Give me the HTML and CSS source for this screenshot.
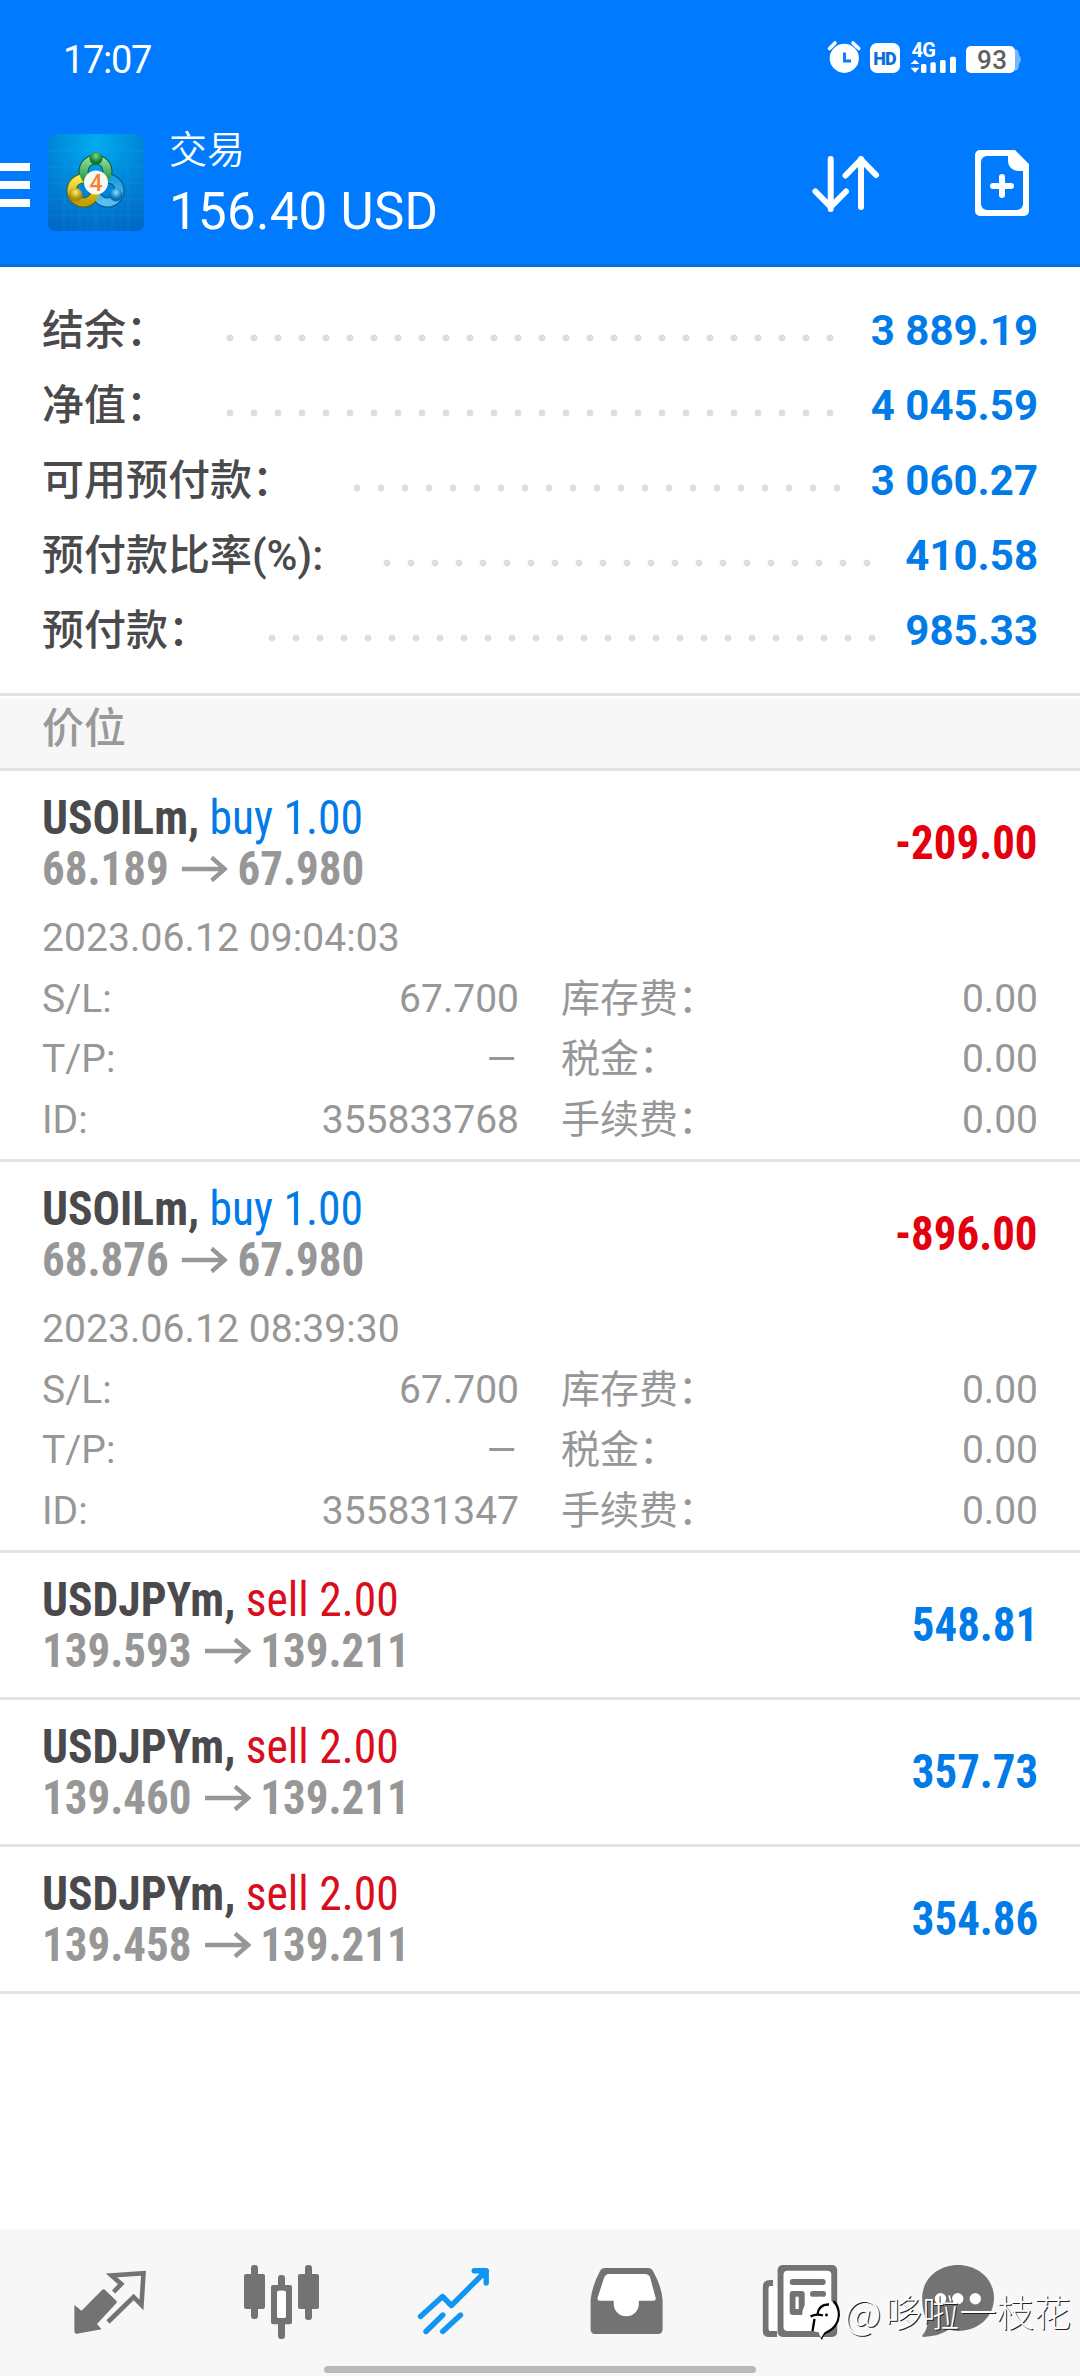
FILE: index.html
```html
<!DOCTYPE html>
<html lang="zh-CN">
<head>
<meta charset="utf-8">
<meta name="viewport" content="width=1080">
<title>交易</title>
<link rel="stylesheet" href="styles.css">
</head>
<body>
<div class="app">
  <header class="top">
    <div class="status">
      <span class="clock">17:07</span>
      <svg class="status-icons" width="200" height="40" viewBox="0 0 200 40">
        <g fill="#fff">
          <circle cx="19.3" cy="20.3" r="14.6"/>
          <path d="M4.500 10.500L10 5M28 5l5.800 5.500" stroke="#fff" stroke-width="3.600" stroke-linecap="round"/>
          <rect x="45" y="5" width="30" height="30" rx="7"/>
          <path d="M90 21.700l4.500 4.300h-9zM90 34.800l-4.500-5.100h9z"/>
          <rect x="96" y="26" width="5.400" height="9" rx="1.500"/>
          <rect x="105.400" y="24.300" width="5.400" height="10.700" rx="1.500"/>
          <rect x="115" y="22" width="5.600" height="13" rx="1.500"/>
          <rect x="125" y="18.700" width="6" height="16.300" rx="1.500"/>
        </g>
        <path d="M190 11q4 1 4 6q4 4 0 9q0 6-4 7z" fill="#73b9ff"/>
        <rect x="141" y="8" width="49" height="27" rx="5" fill="#fff"/>
        <path d="M19.500 14.500v8.500h6.500" fill="none" stroke="#0b7cf4" stroke-width="3"/>
        <text class="hd" x="48.300" y="26.600" textLength="23.400">HD</text>
        <text class="net" x="86.500" y="19.300" textLength="24.500">4G</text>
        <text class="battery" x="152" y="31" textLength="30">93</text>
      </svg>
    </div>
    <div class="bar">
      <div class="menu"><i></i><i></i><i></i></div>
      <svg class="logo" width="96" height="97" viewBox="0 0 96 97">
        <defs>
          <radialGradient id="sky" cx=".5" cy=".1" r=".95"><stop offset="0" stop-color="#00acf0"/><stop offset=".5" stop-color="#0086da"/><stop offset="1" stop-color="#0069c8"/></radialGradient>
          <linearGradient id="green" x2="0" y2="1"><stop offset="0" stop-color="#8ed79a"/><stop offset="1" stop-color="#158c32"/></linearGradient>
          <linearGradient id="gold" x2="0" y2="1"><stop offset="0" stop-color="#ffe64a"/><stop offset="1" stop-color="#c0a000"/></linearGradient>
          <linearGradient id="azure" x2="0" y2="1"><stop offset="0" stop-color="#1c9ce0"/><stop offset="1" stop-color="#58c0ee"/></linearGradient>
          <radialGradient id="gball" cy=".3"><stop offset="0" stop-color="#7fd68f"/><stop offset="1" stop-color="#0c7a2c"/></radialGradient>
          <radialGradient id="yball" cy=".3"><stop offset="0" stop-color="#ffec6a"/><stop offset="1" stop-color="#a68a00"/></radialGradient>
          <radialGradient id="bball" cy=".3"><stop offset="0" stop-color="#8cdcff"/><stop offset="1" stop-color="#0670b4"/></radialGradient>
        </defs>
        <rect width="96" height="97" rx="7" fill="url(#sky)"/>
        <path d="M16 0v97M32 0v97M48 0v97M64 0v97M80 0v97M0 17h96M0 33h96M0 49h96M0 65h96M0 81h96" stroke="#4cc4ff" stroke-opacity=".12"/>
        <g fill="none" stroke-width="8">
          <circle cx="47.500" cy="37.500" r="12" stroke="#0b5b33" stroke-width="10"/>
          <circle cx="35.500" cy="56.500" r="12" stroke="#59650c" stroke-width="10"/>
          <circle cx="59.500" cy="56.500" r="12" stroke="#04538c" stroke-width="10"/>
          <circle cx="59.500" cy="56.500" r="12" stroke="url(#azure)"/>
          <circle cx="35.500" cy="56.500" r="12" stroke="url(#gold)"/>
          <circle cx="47.500" cy="37.500" r="12" stroke="url(#green)"/>
        </g>
        <circle cx="48" cy="24.500" r="6.500" fill="url(#gball)"/>
        <circle cx="27.500" cy="61" r="7" fill="url(#yball)"/>
        <circle cx="68" cy="61" r="6.500" fill="url(#bball)"/>
        <circle cx="48" cy="48.500" r="12" fill="#f8f8f4"/>
        <text class="logo-digit" x="48" y="56.500">4</text>
      </svg>
      <div class="account">
        <div class="screen-name">交易</div>
        <div class="profit-total">156.40 USD</div>
      </div>
      <svg class="sort" width="70" height="66" viewBox="0 0 70 66" fill="none" stroke="#fff" stroke-width="6" stroke-linecap="round" stroke-linejoin="round">
        <path d="M20.700 9v50M5.500 41.500L20.700 57 36 41.500M51 57V9M35.500 25.500L51 9.500l15 15.500"/>
      </svg>
      <svg class="new-order" width="54" height="66" viewBox="0 0 54 66">
        <path fill="#fff" fill-rule="evenodd" d="M5 0H40L54 14V61a5 5 0 0 1-5 5H5a5 5 0 0 1-5-5V5a5 5 0 0 1 5-5zM12 6a6 6 0 0 0-6 6v42a6 6 0 0 0 6 6h30a6 6 0 0 0 6-6V21h-5a10 10 0 0 1-10-10V6z"/>
        <path d="M27 27v18M18 36h18" stroke="#fff" stroke-width="6" stroke-linecap="round"/>
      </svg>
    </div>
  </header>

  <section class="summary">
    <div class="sum-row"><span>结余：</span><i class="dots long gap-a"></i><b>3 889.19</b></div>
    <div class="sum-row"><span>净值：</span><i class="dots long gap-a"></i><b>4 045.59</b></div>
    <div class="sum-row"><span>可用预付款：</span><i class="dots short gap-b"></i><b>3 060.27</b></div>
    <div class="sum-row"><span>预付款比率(%):</span><i class="dots short gap-c"></i><b>410.58</b></div>
    <div class="sum-row"><span>预付款：</span><i class="dots long gap-d"></i><b>985.33</b></div>
  </section>

  <h2 class="section-title">价位</h2>

  <main class="positions">
    <article class="position open">
      <div class="head">
        <div>
          <div class="line cond"><b>USOILm,</b> <span class="buy">buy 1.00</span></div>
          <div class="line cond prices"><b>68.189</b><svg class="arrow" width="49" height="26" viewBox="0 0 49 26"><path d="M0 13H46M32 1.500L46 13 32 24.500" fill="none" stroke="#979797" stroke-width="4.500"/></svg><b>67.980</b></div>
        </div>
        <b class="result cond loss">-209.00</b>
      </div>
      <div class="date">2023.06.12 09:04:03</div>
      <div class="details">
        <div><span>S/L:</span><span>67.700</span></div><div><span>库存费：</span><span>0.00</span></div>
        <div><span>T/P:</span><span class="none">–</span></div><div><span>税金：</span><span>0.00</span></div>
        <div><span>ID:</span><span>355833768</span></div><div><span>手续费：</span><span>0.00</span></div>
      </div>
    </article>
    <article class="position open">
      <div class="head">
        <div>
          <div class="line cond"><b>USOILm,</b> <span class="buy">buy 1.00</span></div>
          <div class="line cond prices"><b>68.876</b><svg class="arrow" width="49" height="26" viewBox="0 0 49 26"><path d="M0 13H46M32 1.500L46 13 32 24.500" fill="none" stroke="#979797" stroke-width="4.500"/></svg><b>67.980</b></div>
        </div>
        <b class="result cond loss">-896.00</b>
      </div>
      <div class="date">2023.06.12 08:39:30</div>
      <div class="details">
        <div><span>S/L:</span><span>67.700</span></div><div><span>库存费：</span><span>0.00</span></div>
        <div><span>T/P:</span><span class="none">–</span></div><div><span>税金：</span><span>0.00</span></div>
        <div><span>ID:</span><span>355831347</span></div><div><span>手续费：</span><span>0.00</span></div>
      </div>
    </article>
    <article class="position">
      <div class="head">
        <div>
          <div class="line cond"><b>USDJPYm,</b> <span class="sell">sell 2.00</span></div>
          <div class="line cond prices"><b>139.593</b><svg class="arrow" width="49" height="26" viewBox="0 0 49 26"><path d="M0 13H46M32 1.500L46 13 32 24.500" fill="none" stroke="#979797" stroke-width="4.500"/></svg><b>139.211</b></div>
        </div>
        <b class="result cond gain">548.81</b>
      </div>
    </article>
    <article class="position">
      <div class="head">
        <div>
          <div class="line cond"><b>USDJPYm,</b> <span class="sell">sell 2.00</span></div>
          <div class="line cond prices"><b>139.460</b><svg class="arrow" width="49" height="26" viewBox="0 0 49 26"><path d="M0 13H46M32 1.500L46 13 32 24.500" fill="none" stroke="#979797" stroke-width="4.500"/></svg><b>139.211</b></div>
        </div>
        <b class="result cond gain">357.73</b>
      </div>
    </article>
    <article class="position">
      <div class="head">
        <div>
          <div class="line cond"><b>USDJPYm,</b> <span class="sell">sell 2.00</span></div>
          <div class="line cond prices"><b>139.458</b><svg class="arrow" width="49" height="26" viewBox="0 0 49 26"><path d="M0 13H46M32 1.500L46 13 32 24.500" fill="none" stroke="#979797" stroke-width="4.500"/></svg><b>139.211</b></div>
        </div>
        <b class="result cond gain">354.86</b>
      </div>
    </article>
  </main>

  <nav class="tabs">
    <svg viewBox="0 0 100 100">
      <path d="M14.400 55L21.500 60.700 42 40Q43.300 38.500 44.600 39.600L56.500 51Q57.300 52 56.500 53L37 74 41.500 79.300 17 83.800Q14.400 84 14.400 81.500z" fill="#737373"/>
      <path d="M53.600 42L61.200 34 51.500 25.500 83.500 23.300 81.500 55 73.600 47 48 72" fill="none" stroke="#737373" stroke-width="4.600"/>
    </svg>
    <svg viewBox="0 0 100 100" fill="#737373">
      <rect x="12" y="24" width="21" height="35" rx="2"/><rect x="19" y="15" width="7" height="54" rx="3"/>
      <path fill-rule="evenodd" d="M41 35H58q2 0 2 2V72.300q0 2-2 2H41q-2 0-2-2V37q0-2 2-2zM47 40.700q-2 0-2 2V66q0 2 2 2h5q2 0 2-2V42.700q0-2-2-2z"/>
      <rect x="46" y="25" width="7" height="13" rx="3"/><rect x="46" y="71" width="7" height="18" rx="3"/>
      <rect x="66" y="24" width="21" height="35" rx="2"/><rect x="73" y="15" width="7" height="55" rx="3"/>
      <rect x="45" y="40.700" width="9" height="27.300" rx="2.500" fill="#fff"/>
    </svg>
    <svg viewBox="0 0 100 100" fill="none" stroke="#1096f2" stroke-width="5.400" stroke-linecap="round" stroke-linejoin="round">
      <path d="M16.500 66.500L38.500 46.500 47.400 55.500 82 21"/><path d="M70.200 20.700H82.200V33M76 21l6 6"/>
      <path d="M38.800 65L22 81.500M56.500 65L38.700 81.500"/>
    </svg>
    <svg viewBox="0 0 100 100">
      <path fill="#737373" d="M14.600 50Q16 36 24 21 25.500 18 29 18H72Q75.500 18 77 21 85.500 36 86.600 50V79Q86.600 84 82 84H19Q14.600 84 14.600 79z"/>
      <path fill="#fff" d="M33 24H69Q72.500 24 74 27L79.700 48Q80 50.700 77 50.700H62.800V54A12.500 12.200 0 0 1 37.700 54V50.700H24Q21 50.700 21.500 48L28 28Q29.500 24 33 24z"/>
    </svg>
    <svg viewBox="0 0 100 100">
      <path d="M25 30V36H22Q20.700 36 20.700 38V79Q20.700 81 22 81H29V87H21Q14.800 87 14.800 81V37Q14.800 30 22 30z" fill="#737373"/>
      <rect x="20.700" y="36" width="9" height="45" rx="2" fill="#fff"/>
      <rect x="29.600" y="15" width="59.600" height="72" rx="5" fill="#737373"/>
      <rect x="35.500" y="20.700" width="47.800" height="60.300" rx="4" fill="#fff"/>
      <g fill="#737373"><rect x="41.700" y="29" width="36" height="6" rx="3"/><rect x="62" y="41" width="16" height="5.700" rx="2.800"/><rect x="41.700" y="41" width="15" height="24" rx="3"/></g>
      <rect x="47.500" y="46.700" width="3.200" height="12.300" fill="#fff"/>
    </svg>
    <svg viewBox="0 0 100 100">
      <path fill="#737373" d="M38 15C58 15 74 29 74 48S58 81 38 81Q33 81 29 79.600 20 86 4 87 1 87 3 84.500 7 80 7.500 73 2 61 2.200 48C2.200 29 18 15 38 15z"/>
      <g fill="#fff"><circle cx="20.500" cy="48.700" r="5.700"/><circle cx="37.700" cy="48.700" r="5.700"/><circle cx="55.300" cy="48.700" r="5.700"/></g>
    </svg>
    <div class="home-bar"></div>
    <div class="credit">
      <svg width="46" height="48" viewBox="0 0 46 48">
        <path d="M34 5Q40 10 40 20 39 32 29 37.500 24 38 22 45L20 42 24 34z" fill="#000"/>
        <circle cx="20" cy="19.500" r="17.800" fill="#fff"/>
        <path d="M18 33Q19 40 21 43 23 38 28 34z" fill="#fff"/>
        <path d="M29 9.500Q19 9 17.500 19M10.500 21.500Q16 18.500 23 20.500M14.500 24L12.500 36" fill="none" stroke="#000" stroke-width="2.300"/><circle cx="26.500" cy="20" r="1.400"/>
      </svg>
      <span class="at">@</span><span>哆啦一枝花</span>
    </div>
  </nav>
</div>
</body>
</html>
```
FILE: styles.css
```css
* { box-sizing: border-box; }
body {
  margin: 0;
  background: #fff;
  color: #4a4a4d;
  font-family: Roboto, "Noto Sans CJK SC", sans-serif;
}
.app { width: 1080px; height: 2376px; display: flex; flex-direction: column; }

/* blue header */
.top { height: 267px; background: #007bff; border-bottom: 3px solid #0a6fd6; color: #fff; }
.status { height: 120px; padding: 38px 55px 0 63px; display: flex; justify-content: space-between; }
.clock { font-size: 38px; line-height: 45px; letter-spacing: -1.300px; }
.hd { font-size: 18px; font-weight: 900; fill: #0b70dc; }
.net { font-size: 20px; font-weight: 700; fill: #fff; }
.battery { font-size: 26px; font-weight: 500; fill: #606060; }
.bar { height: 144px; display: flex; align-items: flex-start; padding-right: 51px; }
.menu { width: 30px; margin: 43px 18px 0 0; display: grid; gap: 10px; }
.menu i { height: 8px; background: #fff; }
.logo { margin-top: 14px; flex: none; }
.logo-digit { font-size: 23px; font-weight: 500; fill: #f08435; text-anchor: middle; }
.account { margin: 6px auto 0 25px; }
.screen-name { font-size: 38px; line-height: 48px; font-weight: 350; }
.profit-total { font-size: 51px; line-height: 76px; letter-spacing: .3px; }
.sort { margin: 30px 95px 0 0; }
.new-order { margin-top: 30px; }

/* account summary */
.summary { padding: 26px 42px 25px; height: 426px; }
.sum-row { height: 75px; display: flex; line-height: 75px; font-size: 42px; font-weight: 500; white-space: nowrap; }
.sum-row b { color: #007be8; font-weight: 700; width: 200px; text-align: right; flex: none; }
.sum-row span { flex: 1; }
.dots {
  height: 8px; margin-top: 41px; flex: none;
  background: radial-gradient(circle at 12px 4px, #dedede 3px, transparent 3.900px) 0 0 / 24px 8px repeat-x;
}
.long { width: 624px; }
.short { width: 504px; }
.gap-a { margin-right: -4px; }
.gap-b { margin-right: -10.500px; }
.gap-c { margin-right: -41px; }
.gap-d { margin-right: -46px; }

.section-title {
  height: 78px; margin: 0; padding: 0 42px;
  border: solid #e4e4e4; border-width: 3px 0;
  background: #f7f7f7; box-shadow: inset 0 3px #fff;
  color: #999; font-size: 42px; font-weight: 500; line-height: 66px;
}

/* positions */
.position { padding: 21px 42px; border-bottom: 3px solid #e4e4e4; }
.position.open { padding-bottom: 9px; }
.head { display: flex; justify-content: space-between; align-items: center; }
.cond {
  font-family: "Roboto Condensed", Roboto, sans-serif; font-stretch: 75%;
  font-size: 48px; line-height: 51px;
  transform: scaleX(.949); transform-origin: left;
}
.result { transform: scaleX(.935); transform-origin: right; margin-top: -2px; }
.line { height: 51px; white-space: nowrap; }
.prices { color: #979797; display: flex; align-items: center; transform: scaleX(.937); }
.arrow { margin: 0 10.500px 0 14px; }
.buy, .gain { color: #007be8; }
.sell { color: #d90d1c; }
.loss { color: #e3000f; }
.date { margin-top: 13px; font-size: 39px; line-height: 62px; height: 61.500px; letter-spacing: .1px; color: #979797; }
.details { display: grid; grid-template-columns: 1fr 1fr; column-gap: 42px; color: #979797; font-size: 39px; line-height: 60.500px; }
.details div { display: flex; justify-content: space-between; height: 60.500px; }
.details .none { transform: scaleX(1.300); transform-origin: right; }

/* bottom tabs */
.tabs { position: relative; margin-top: auto; height: 147px; padding: 21px 24px 0; background: #f7f7f7; display: grid; grid-template-columns: repeat(6, 1fr); justify-items: center; }
.tabs > svg { width: 100px; height: 100px; }
.home-bar { position: absolute; left: 324px; bottom: 3px; width: 432px; height: 7px; border-radius: 4px; background: #bababa; }
.credit { position: absolute; left: 800px; top: 66px; display: flex; color: #fff; font: 300 37.200px/42px "Noto Sans CJK SC", sans-serif; white-space: nowrap; text-shadow: 1px 1px 0 #222; }
.credit span { margin-top: -5px; }
.credit .at { width: 39px; margin-left: -2px; margin-right: 2px; font-size: 41px; }
```
